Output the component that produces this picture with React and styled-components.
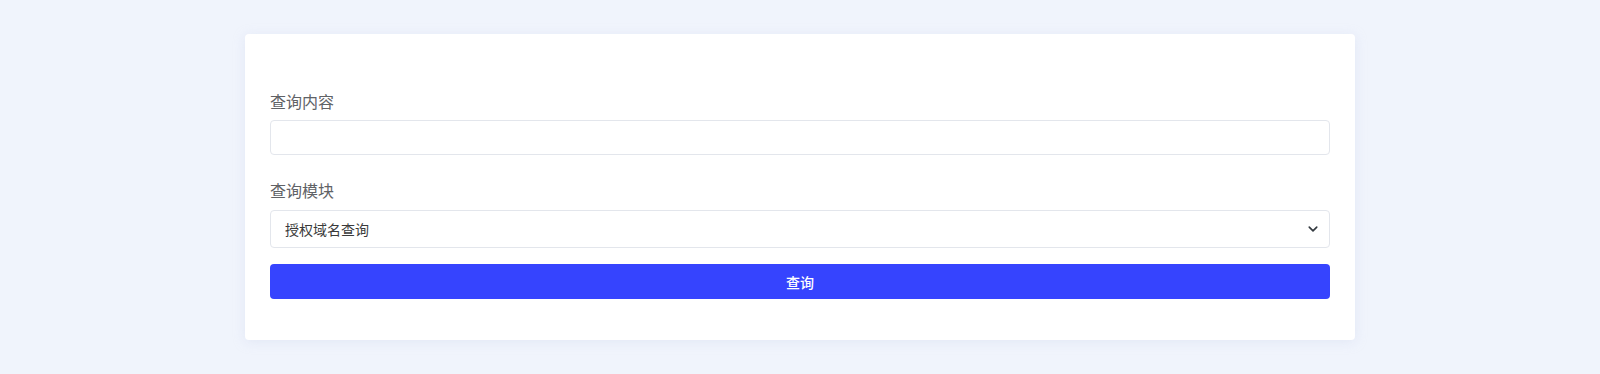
import React from 'react';
import styled, { createGlobalStyle } from 'styled-components';

const GlobalStyle = createGlobalStyle`
  html, body {
    margin: 0;
    padding: 0;
    background: #f0f4fc;
    font-family: "Noto Sans CJK SC", "Noto Sans", sans-serif;
  }
`;

const Page = styled.div`
  padding-top: 34px;
  min-height: 374px;
  box-sizing: border-box;
`;

const Card = styled.div`
  width: 1110px;
  margin: 0 auto;
  box-sizing: border-box;
  padding: 55px 25px 41px;
  background: #fff;
  border-radius: 4px;
  box-shadow: 0 2px 12px rgba(200, 210, 235, 0.35);
`;

const Group = styled.div`
  display: flex;
  flex-direction: column;
  margin-bottom: ${(p) => p.$gap || 0}px;
`;

const Label = styled.label`
  font-size: 16px;
  line-height: 24px;
  color: #606266;
  margin-bottom: ${(p) => p.$gap || 7}px;
`;

const Input = styled.input`
  height: 35px;
  box-sizing: border-box;
  border: 1px solid #e3e6ec;
  border-radius: 4px;
  padding: 0 14px;
  font-size: 14px;
  font-family: inherit;
  outline: none;
`;

const SelectWrap = styled.div`
  position: relative;
`;

const Select = styled.select`
  width: 100%;
  height: 38px;
  box-sizing: border-box;
  border: 1px solid #e3e6ec;
  border-radius: 4px;
  padding: 0 36px 0 14px;
  font-size: 14px;
  font-family: inherit;
  color: #3a3a3a;
  background: #fff;
  appearance: none;
  outline: none;
`;

const Chevron = styled.svg`
  position: absolute;
  right: 12px;
  top: 50%;
  transform: translateY(-50%);
  pointer-events: none;
`;

const Button = styled.button`
  width: 100%;
  height: 35px;
  border: none;
  border-radius: 4px;
  background: #3644fe;
  color: #fff;
  font-size: 14px;
  font-weight: 500;
  font-family: inherit;
  cursor: pointer;
`;

export default function App() {
  return (
    <>
      <GlobalStyle />
      <Page>
        <Card>
          <Group $gap={23}>
            <Label>查询内容</Label>
            <Input type="text" />
          </Group>
          <Group $gap={16}>
            <Label $gap={8}>查询模块</Label>
            <SelectWrap>
              <Select defaultValue="domain">
                <option value="domain">授权域名查询</option>
              </Select>
              <Chevron width="10" height="10" viewBox="0 0 16 16">
                <path d="M2 5l6 6 6-6" fill="none" stroke="#343a40" strokeWidth="2.6" strokeLinecap="round" strokeLinejoin="round" />
              </Chevron>
            </SelectWrap>
          </Group>
          <Button type="button">查询</Button>
        </Card>
      </Page>
    </>
  );
}
